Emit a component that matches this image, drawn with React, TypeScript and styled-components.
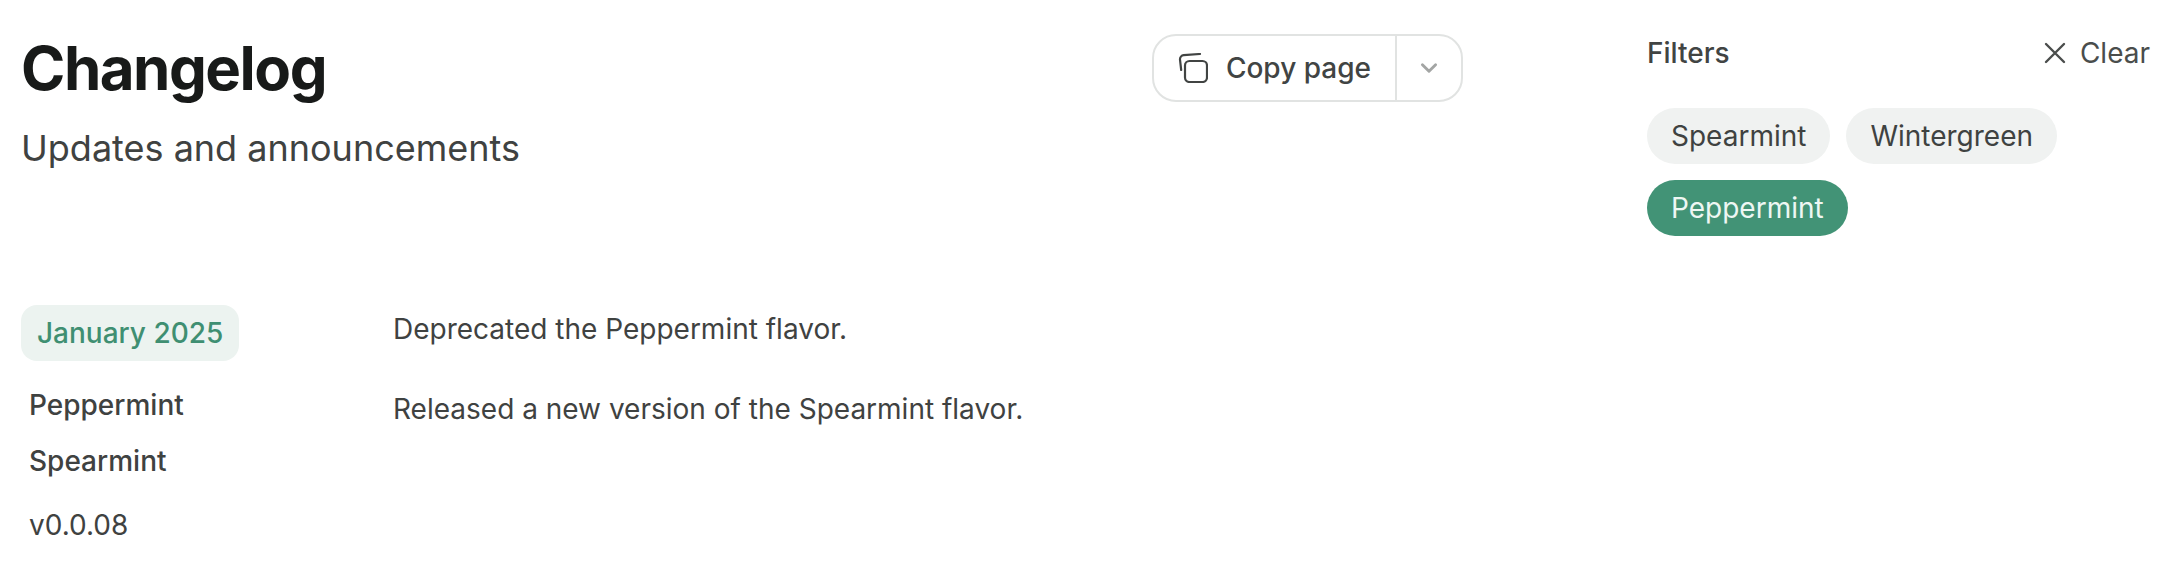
import React from "react";
import styled, { createGlobalStyle } from "styled-components";

const GlobalStyle = createGlobalStyle`
  html, body {
    margin: 0;
    padding: 0;
    background: #fff;
    font-family: Inter, "Liberation Sans", sans-serif;
    color: #3f4241;
  }
`;

const App = () => {
  return (
    <>
      <GlobalStyle />
      <Page>
        <Main>
          <Header>
            <div>
              <Title>Changelog</Title>
              <Subtitle>Updates and announcements</Subtitle>
            </div>
            <CopyGroup>
              <CopyButton>
                <svg width="30" height="30" viewBox="0 0 30 30" fill="none" stroke="#414443" strokeWidth="2.2" strokeLinecap="round" strokeLinejoin="round">
                  <rect x="7" y="8" width="22" height="21" rx="4.5" />
                  <path d="M3.2 17 2 6.6a4.2 4.2 0 0 1 3.7-4.5L22 1" />
                </svg>
                Copy page
              </CopyButton>
              <ChevronButton>
                <svg width="22" height="22" viewBox="0 0 20 20" fill="none" stroke="#a3a5a4" strokeWidth="2.6" strokeLinecap="round" strokeLinejoin="round">
                  <path d="M4 7 10 13 16 7" />
                </svg>
              </ChevronButton>
            </CopyGroup>
          </Header>
          <Entry>
            <Meta>
              <DateBadge>January 2025</DateBadge>
              <TagList>
                <TagName>Peppermint</TagName>
                <TagName>Spearmint</TagName>
              </TagList>
              <Version>v0.0.08</Version>
            </Meta>
            <Notes>
              <Note>Deprecated the Peppermint flavor.</Note>
              <Note>Released a new version of the Spearmint flavor.</Note>
            </Notes>
          </Entry>
        </Main>
        <Aside>
          <FilterHead>
            <FilterLabel>Filters</FilterLabel>
            <ClearButton>
              <svg width="26" height="26" viewBox="0 0 26 26" fill="none" stroke="#4a4d4c" strokeWidth="2.4" strokeLinecap="round">
                <path d="M4 4 22 22M22 4 4 22" />
              </svg>
              Clear
            </ClearButton>
          </FilterHead>
          <Pills>
            <Pill>Spearmint</Pill>
            <Pill>Wintergreen</Pill>
            <Pill $active>Peppermint</Pill>
          </Pills>
        </Aside>
      </Page>
    </>
  );
};

export default App;

const Page = styled.div`
  display: flex;
  width: 2170px;
  height: 582px;
  box-sizing: border-box;
  padding: 34px 20px 0 21px;
  overflow: hidden;
`;

const Main = styled.div`
  width: 1442px;
  flex-shrink: 0;
`;

const Header = styled.div`
  display: flex;
  justify-content: space-between;
  align-items: flex-start;
`;

const Title = styled.h1`
  margin: 0;
  font-size: 60px;
  line-height: 68px;
  font-weight: 700;
  letter-spacing: -1.5px;
  color: #181a19;
`;

const Subtitle = styled.p`
  margin: 22px 0 0;
  font-size: 36px;
  line-height: 48px;
  font-weight: 400;
  color: #3f4241;
`;

const CopyGroup = styled.div`
  display: flex;
  height: 68px;
  box-sizing: border-box;
  border: 2px solid #e1e3e2;
  border-radius: 24px;
`;

const CopyButton = styled.div`
  display: flex;
  align-items: center;
  gap: 18px;
  padding: 0 24px 0 24px;
  border-right: 2px solid #e1e3e2;
  font-size: 28px;
  font-weight: 500;
  color: #414443;
`;

const ChevronButton = styled.div`
  display: flex;
  align-items: center;
  justify-content: center;
  width: 64px;
`;

const Entry = styled.div`
  display: flex;
  margin-top: 133px;
`;

const Meta = styled.div`
  width: 372px;
  flex-shrink: 0;
`;

const DateBadge = styled.div`
  display: inline-block;
  padding: 0 16px;
  height: 56px;
  line-height: 56px;
  border-radius: 16px;
  background: #ecf3f0;
  color: #3f8f72;
  font-size: 28px;
  font-weight: 500;
`;

const TagList = styled.div`
  margin-top: 16px;
`;

const TagName = styled.div`
  margin-left: 8px;
  font-size: 28px;
  line-height: 56px;
  font-weight: 500;
  color: #3f4241;
`;

const Version = styled.div`
  margin: 8px 0 0 8px;
  font-size: 28px;
  line-height: 56px;
  color: #3f4241;
`;

const Notes = styled.div`
  display: flex;
  flex-direction: column;
  gap: 40px;
  padding-top: 4px;
`;

const Note = styled.p`
  margin: 0;
  font-size: 28px;
  line-height: 40px;
  color: #3f4241;
`;

const Aside = styled.div`
  margin-left: 184px;
  flex: 1;
`;

const FilterHead = styled.div`
  display: flex;
  justify-content: space-between;
  align-items: center;
  height: 36px;
  margin-top: 1px;
`;

const FilterLabel = styled.div`
  font-size: 28px;
  font-weight: 500;
  color: #414443;
`;

const ClearButton = styled.div`
  display: flex;
  align-items: center;
  gap: 12px;
  font-size: 28px;
  color: #4a4d4c;
`;

const Pills = styled.div`
  display: flex;
  flex-wrap: wrap;
  gap: 16px;
  margin-top: 37px;
`;

const Pill = styled.div<{ $active?: boolean }>`
  height: 56px;
  line-height: 57px;
  padding: 0 24px;
  border-radius: 28px;
  font-size: 28px;
  background: ${(p) => (p.$active ? "#429376" : "#f0f2f1")};
  color: ${(p) => (p.$active ? "#eef7f3" : "#3f4241")};
`;
